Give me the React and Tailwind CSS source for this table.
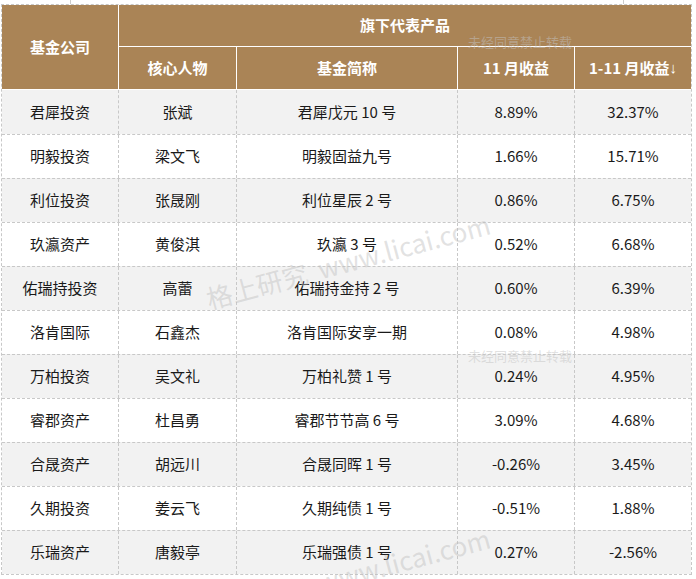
import React from 'react';

const rows = [
  ['君犀投资', '张斌', '君犀戊元 10 号', '8.89%', '32.37%'],
  ['明毅投资', '梁文飞', '明毅固益九号', '1.66%', '15.71%'],
  ['利位投资', '张晟刚', '利位星辰 2 号', '0.86%', '6.75%'],
  ['玖瀛资产', '黄俊淇', '玖瀛 3 号', '0.52%', '6.68%'],
  ['佑瑞持投资', '高蕾', '佑瑞持金持 2 号', '0.60%', '6.39%'],
  ['洛肯国际', '石鑫杰', '洛肯国际安享一期', '0.08%', '4.98%'],
  ['万柏投资', '吴文礼', '万柏礼赞 1 号', '0.24%', '4.95%'],
  ['睿郡资产', '杜昌勇', '睿郡节节高 6 号', '3.09%', '4.68%'],
  ['合晟资产', '胡远川', '合晟同晖 1 号', '-0.26%', '3.45%'],
  ['久期投资', '姜云飞', '久期纯债 1 号', '-0.51%', '1.88%'],
  ['乐瑞资产', '唐毅亭', '乐瑞强债 1 号', '0.27%', '-2.56%'],
];

const cols = 'grid grid-cols-[117px_118px_221px_117px_116px]';

const Watermark = ({ top }) => (
  <>
    <span
      className="absolute left-[468px] text-[13px] leading-none text-[rgba(195,195,195,0.5)] whitespace-nowrap"
      style={{ top }}
    >
      未经同意禁止转载
    </span>
    <span
      className="absolute left-[348px] text-[26px] leading-none text-[rgba(190,190,190,0.45)] whitespace-pre -translate-x-1/2 -translate-y-1/2 -rotate-[15deg]"
      style={{ top: top + 226 }}
    >
      格上研究  www.licai.com
    </span>
  </>
);

const App = () => {
  return (
    <div
      className="relative w-[696px] h-[579px] bg-white overflow-hidden text-[15px] text-[#1a1a1a]"
      style={{ fontFamily: '"Noto Sans CJK SC", "Noto Sans", sans-serif' }}
    >
      <div className="flex h-[4px]">
        <div className="ml-[70px] w-px bg-[#cccccc]" />
        <div className="ml-[552px] w-px bg-[#cccccc]" />
      </div>
      <div className="ml-px w-[691px] border border-dashed border-[#c8c8c8]">
        <div className={`${cols} grid-rows-[42px_42px] bg-[#aa8456] text-white font-bold border-b border-white`}>
          <div className="row-span-2 flex items-center justify-center border-r border-white">基金公司</div>
          <div className="col-span-4 flex items-center justify-center border-b border-white">旗下代表产品</div>
          <div className="flex items-center justify-center border-r border-white">核心人物</div>
          <div className="flex items-center justify-center border-r border-white">基金简称</div>
          <div className="flex items-center justify-center border-r border-white">11 月收益</div>
          <div className="flex items-center justify-center">
            1-11 月收益<span className="font-['Liberation_Sans',sans-serif] font-normal">↓</span>
          </div>
        </div>
        {rows.map((r, i) => (
          <div
            key={i}
            className={`${cols} h-[44px] ${i > 0 ? 'border-t border-dashed border-[#c8c8c8]' : ''} ${i % 2 === 0 ? 'bg-[#f2f2f2]' : 'bg-white'}`}
          >
            {r.map((c, j) => (
              <div
                key={j}
                className={`flex items-center justify-center ${j < 4 ? 'border-r border-dashed border-[#c8c8c8]' : ''}`}
              >
                {c}
              </div>
            ))}
          </div>
        ))}
      </div>
      <Watermark top={35} />
      <Watermark top={349} />
    </div>
  );
};

export default App;
